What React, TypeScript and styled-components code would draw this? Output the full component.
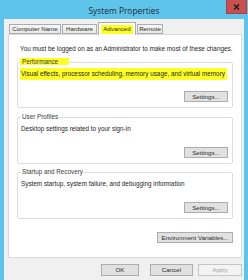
import React from 'react';
import styled, { createGlobalStyle } from 'styled-components';

const GlobalStyle = createGlobalStyle`
  html, body {
    margin: 0;
    padding: 0;
    background: #5ec4eb;
  }
  * {
    box-sizing: border-box;
  }
`;

const Window = styled.div`
  width: 248px;
  height: 280px;
  background: #5ec4eb;
  display: flex;
  flex-direction: column;
  overflow: hidden;
  font-family: 'Liberation Sans', Arial, sans-serif;
  color: #1e1e1e;
`;

const TitleBar = styled.div`
  position: relative;
  height: 19px;
  flex: none;
  display: flex;
  align-items: center;
  justify-content: center;
  padding-top: 1px;
`;

const Title = styled.span`
  font-family: 'Open Sans', 'Liberation Sans', sans-serif;
  font-size: 8.4px;
  color: #1f2a33;
`;

const CloseButton = styled.div`
  position: absolute;
  top: 0;
  right: 1px;
  width: 21px;
  height: 14px;
  background: #c75050;
  border: 1px solid #a94343;
  border-top: none;
  display: flex;
  align-items: center;
  justify-content: center;
`;

const Body = styled.div`
  flex: 1;
  margin: 0 4px;
  background: #f0f0f0;
  padding: 3px 0 0 4px;
  display: flex;
  flex-direction: column;
`;

const TabStrip = styled.div`
  display: flex;
  align-items: flex-end;
  height: 12px;
  padding-left: 1px;
  position: relative;
  z-index: 1;
`;

const Tab = styled.div<{ $active?: boolean; $w: number }>`
  width: ${p => p.$w}px;
  height: ${p => (p.$active ? 13 : 10)}px;
  margin-right: 1px;
  margin-bottom: ${p => (p.$active ? -1 : 0)}px;
  border: 1px solid #acacac;
  border-bottom: ${p => (p.$active ? 'none' : '1px solid #acacac')};
  background: ${p => (p.$active ? '#ffffff' : 'linear-gradient(#f6f6f6, #e8e8e8)')};
  font-size: 6.2px;
  line-height: 8px;
  display: flex;
  align-items: ${p => (p.$active ? 'flex-start' : 'center')};
  justify-content: center;
  padding-top: ${p => (p.$active ? 2 : 0)}px;
  color: #2a2a2a;
`;

const Highlight = styled.span`
  background: #ffff26;
`;

const TabMark = styled(Highlight)`
  padding: 0 2px 1px;
`;

const Panel = styled.div`
  width: 234px;
  height: 224px;
  background: #ffffff;
  border: 1px solid #d9d9d9;
  padding: 0 8px 0 8px;
  display: flex;
  flex-direction: column;
`;

const Intro = styled.div`
  margin-top: 10px;
  padding-left: 3px;
  font-size: 6.35px;
  line-height: 8px;
  white-space: nowrap;
`;

const GroupBox = styled.div<{ $top: number; $h: number }>`
  margin-top: ${p => p.$top}px;
  height: ${p => p.$h}px;
  border: 1px solid #dcdcdc;
  border-radius: 2px;
  padding: 0 4px 5px 3px;
  display: flex;
  flex-direction: column;
`;

const Legend = styled.div`
  margin-top: -5px;
  align-self: flex-start;
  background: #ffffff;
  padding: 0 1px;
  font-size: 6.3px;
  line-height: 8px;
  color: #3a3a3a;
  white-space: nowrap;
`;

const LegendMark = styled(Highlight)`
  padding: 0 11px 0 2px;
  margin-left: -2px;
`;

const Description = styled.div`
  margin-top: 4px;
  font-size: 6.35px;
  line-height: 8px;
  white-space: nowrap;
`;

const DescMark = styled(Highlight)`
  display: inline-block;
  padding: 2px 2px 2px 1px;
  margin: -2px 0 -2px -1px;
`;

const Button = styled.div<{ $w: number; $disabled?: boolean }>`
  width: ${p => p.$w}px;
  height: 11px;
  flex: none;
  background: ${p => (p.$disabled ? '#f4f4f4' : '#e1e1e1')};
  border: 1px solid ${p => (p.$disabled ? '#c6c6c6' : '#adadad')};
  font-size: 6.2px;
  line-height: 9px;
  text-align: center;
  color: ${p => (p.$disabled ? '#a3a3a3' : '#2a2a2a')};
`;

const GroupButton = styled(Button)`
  margin-top: auto;
  align-self: flex-end;
`;

const EnvRow = styled.div`
  display: flex;
  justify-content: flex-end;
  margin-top: 13px;
`;

const Footer = styled.div`
  display: flex;
  justify-content: flex-end;
  margin-top: 6px;
`;

const FooterButton = styled(Button)<{ $gap: number }>`
  height: 12px;
  line-height: 10px;
  margin-right: ${p => p.$gap}px;
`;

const CloseGlyph = () => (
  <svg width="7" height="6" viewBox="0 0 7 6">
    <path d="M1 0.5 L6 5.5 M6 0.5 L1 5.5" stroke="#1a1a1a" strokeWidth="1.4" />
  </svg>
);

const SystemProperties = () => {
  return (
    <Window>
      <GlobalStyle />
      <TitleBar>
        <Title>System Properties</Title>
        <CloseButton>
          <CloseGlyph />
        </CloseButton>
      </TitleBar>
      <Body>
        <TabStrip>
          <Tab $w={52}>Computer Name</Tab>
          <Tab $w={35}>Hardware</Tab>
          <Tab $w={38} $active>
            <TabMark>Advanced</TabMark>
          </Tab>
          <Tab $w={26}>Remote</Tab>
        </TabStrip>
        <Panel>
          <Intro>You must be logged on as an Administrator to make most of these changes.</Intro>

          <GroupBox $top={9} $h={46}>
            <Legend>
              <LegendMark>Performance</LegendMark>
            </Legend>
            <Description>
              <DescMark>Visual effects, processor scheduling, memory usage, and virtual memory</DescMark>
            </Description>
            <GroupButton $w={44}>Settings...</GroupButton>
          </GroupBox>

          <GroupBox $top={9} $h={47}>
            <Legend>User Profiles</Legend>
            <Description>Desktop settings related to your sign-in</Description>
            <GroupButton $w={44}>Settings...</GroupButton>
          </GroupBox>

          <GroupBox $top={8} $h={47}>
            <Legend>Startup and Recovery</Legend>
            <Description>System startup, system failure, and debugging information</Description>
            <GroupButton $w={44}>Settings...</GroupButton>
          </GroupBox>

          <EnvRow>
            <Button $w={76}>Environment Variables...</Button>
          </EnvRow>
        </Panel>
        <Footer>
          <FooterButton $w={38} $gap={11}>OK</FooterButton>
          <FooterButton $w={43} $gap={5}>Cancel</FooterButton>
          <FooterButton $w={44} $gap={2} $disabled>
            Apply
          </FooterButton>
        </Footer>
      </Body>
    </Window>
  );
};

export default SystemProperties;
